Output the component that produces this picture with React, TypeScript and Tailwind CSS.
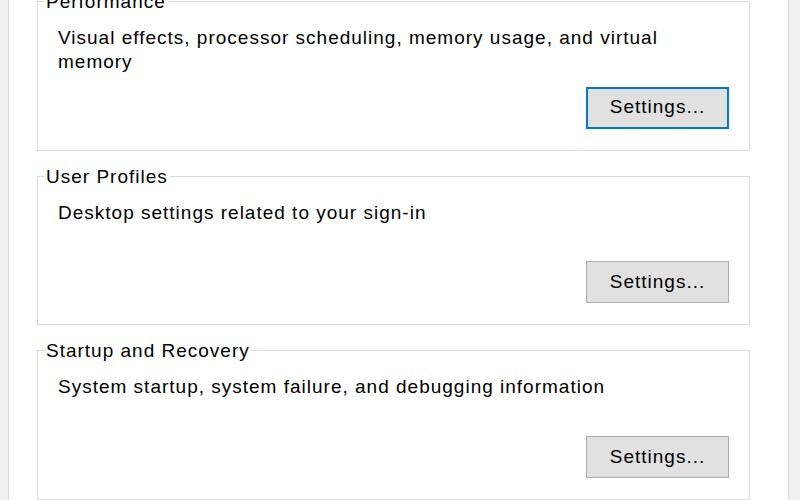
import React from 'react';

const GROUPS = [
  {
    title: 'Performance',
    text: 'Visual effects, processor scheduling, memory usage, and virtual memory',
    focused: true,
  },
  {
    title: 'User Profiles',
    text: 'Desktop settings related to your sign-in',
    focused: false,
  },
  {
    title: 'Startup and Recovery',
    text: 'System startup, system failure, and debugging information',
    focused: false,
  },
];

const GroupBox: React.FC<{ title: string; text: string; focused: boolean }> = ({ title, text, focused }) => {
  return (
    <div className="relative flex h-[150px] flex-col border border-[#dcdcdc] pt-[24px] pr-[20px] pb-[21px] pl-[20px]">
      <span className="absolute -top-[11px] left-[6px] bg-white px-[2px] text-[19px] leading-[22px] tracking-[1px]">
        {title}
      </span>
      <p className="text-[19px] leading-[24px] tracking-[1px]">{text}</p>
      <div className="mt-auto flex justify-end">
        <button
          className={
            focused
              ? 'h-[42px] w-[143px] border-2 border-[#0078d7] bg-[#e1e1e1] text-[19px] tracking-[1px] text-black'
              : 'h-[42px] w-[143px] border border-[#adadad] bg-[#e1e1e1] text-[19px] tracking-[1px] text-black'
          }
        >
          Settings...
        </button>
      </div>
    </div>
  );
};

const App: React.FC = () => {
  return (
    <div
      className="flex h-[500px] w-[800px] overflow-hidden bg-[#f0f0f0] pl-[8px] pr-[11px] text-black"
      style={{ fontFamily: '"Liberation Sans", Arial, sans-serif' }}
    >
      <div className="flex flex-1 flex-col gap-[25px] border-x border-[#d9d9d9] bg-white pt-[1px] pl-[28px] pr-[38px]">
        {GROUPS.map((g) => (
          <GroupBox key={g.title} {...g} />
        ))}
      </div>
    </div>
  );
};

export default App;
